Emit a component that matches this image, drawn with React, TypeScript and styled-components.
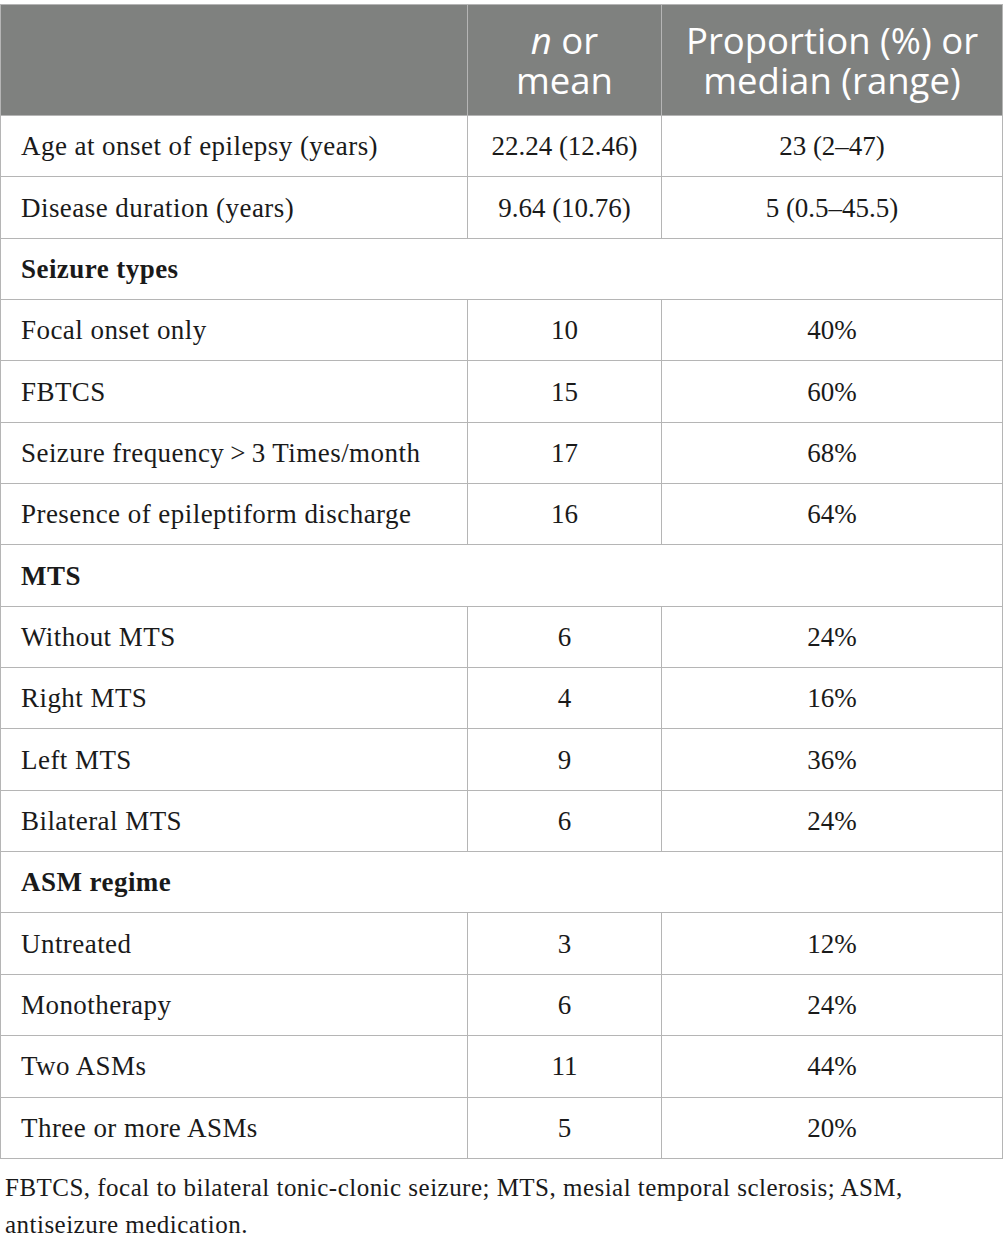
import React from "react";
import styled, { createGlobalStyle } from "styled-components";

const Global = createGlobalStyle`
  html, body { margin: 0; padding: 0; background: #fff; }
  body { font-family: "Liberation Serif", "Times New Roman", serif; color: #1a1a1a; }
`;

const Page = styled.div`
  width: 1003px;
  padding-top: 4px;
`;

const Table = styled.table`
  width: 1002px;
  border-collapse: collapse;
  table-layout: fixed;
  border: 1px solid #b5b5b5;
`;

const HeadCell = styled.th`
  background: #7f817f;
  color: #fff;
  font-family: "Open Sans", "Noto Sans", sans-serif;
  font-weight: 400;
  font-size: 36.5px;
  line-height: 40px;
  text-align: center;
  vertical-align: middle;
  height: 110px;
  padding: 0;
  border: 1px solid #b5b5b5;
  border-top: none;
  white-space: nowrap;
  em { font-style: italic; }
`;

const Row = styled.tr`
  height: 61.35px;
`;

const Cell = styled.td<{ $center?: boolean; $bold?: boolean }>`
  font-size: 27px;
  line-height: 30px;
  padding: 0 0 0 ${(p) => (p.$center ? "0" : "20px")};
  text-align: ${(p) => (p.$center ? "center" : "left")};
  letter-spacing: ${(p) => (p.$center ? "0" : "0.45px")};
  font-weight: ${(p) => (p.$bold ? 700 : 400)};
  border: 1px solid #b5b5b5;
  vertical-align: middle;
  white-space: nowrap;
`;

const Footnote = styled.p`
  margin: 10px 0 0 5px;
  font-size: 25px;
  letter-spacing: 0.48px;
  line-height: 37px;
  color: #1a1a1a;
  white-space: nowrap;
`;

type Item = { label: string; n?: string; p?: string; section?: boolean };

const rows: Item[] = [
  { label: "Age at onset of epilepsy (years)", n: "22.24 (12.46)", p: "23 (2–47)" },
  { label: "Disease duration (years)", n: "9.64 (10.76)", p: "5 (0.5–45.5)" },
  { label: "Seizure types", section: true },
  { label: "Focal onset only", n: "10", p: "40%" },
  { label: "FBTCS", n: "15", p: "60%" },
  { label: "Seizure frequency\u2009>\u20093 Times/month", n: "17", p: "68%" },
  { label: "Presence of epileptiform discharge", n: "16", p: "64%" },
  { label: "MTS", section: true },
  { label: "Without MTS", n: "6", p: "24%" },
  { label: "Right MTS", n: "4", p: "16%" },
  { label: "Left MTS", n: "9", p: "36%" },
  { label: "Bilateral MTS", n: "6", p: "24%" },
  { label: "ASM regime", section: true },
  { label: "Untreated", n: "3", p: "12%" },
  { label: "Monotherapy", n: "6", p: "24%" },
  { label: "Two ASMs", n: "11", p: "44%" },
  { label: "Three or more ASMs", n: "5", p: "20%" },
];

export default function App() {
  return (
    <Page>
      <Global />
      <Table>
        <colgroup>
          <col style={{ width: "467px" }} />
          <col style={{ width: "194px" }} />
          <col style={{ width: "341px" }} />
        </colgroup>
        <thead>
          <tr>
            <HeadCell />
            <HeadCell>
              <em>n</em> or
              <br />
              mean
            </HeadCell>
            <HeadCell>
              Proportion (%) or
              <br />
              median (range)
            </HeadCell>
          </tr>
        </thead>
        <tbody>
          {rows.map((r) =>
            r.section ? (
              <Row key={r.label}>
                <Cell colSpan={3} $bold>
                  {r.label}
                </Cell>
              </Row>
            ) : (
              <Row key={r.label}>
                <Cell>{r.label}</Cell>
                <Cell $center>{r.n}</Cell>
                <Cell $center>{r.p}</Cell>
              </Row>
            )
          )}
        </tbody>
      </Table>
      <Footnote>
        FBTCS, focal to bilateral tonic-clonic seizure; MTS, mesial temporal sclerosis; ASM,
        <br />
        antiseizure medication.
      </Footnote>
    </Page>
  );
}
